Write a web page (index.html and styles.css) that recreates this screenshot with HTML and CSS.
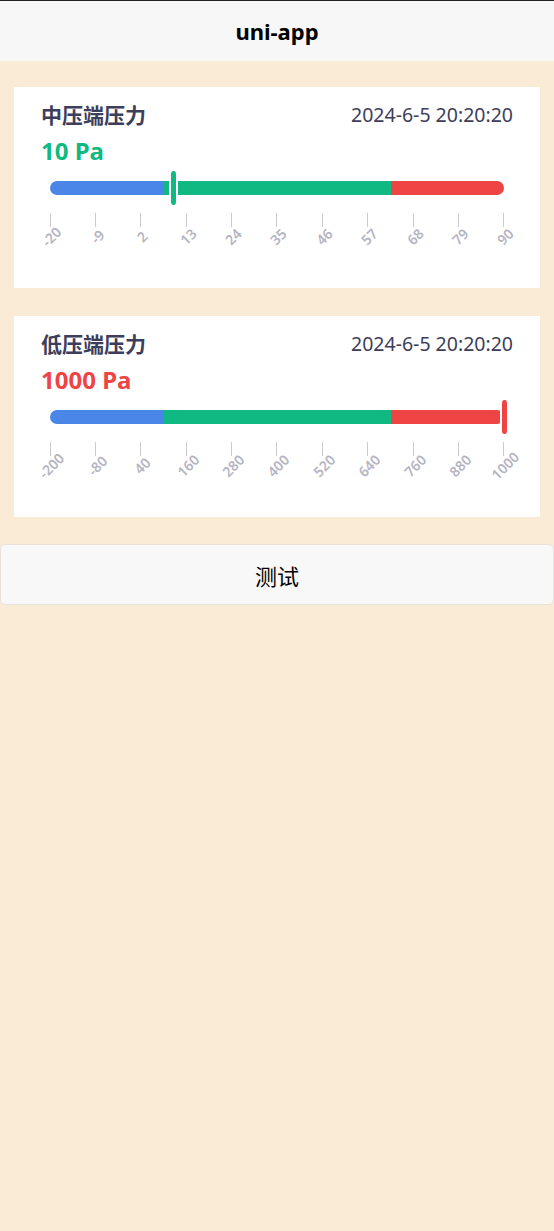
FILE: index.html
```html
<!DOCTYPE html>
<html lang="zh-CN">
<head>
  <meta charset="UTF-8">
  <title>uni-app</title>
  <link rel="stylesheet" href="styles.css">
</head>
<body>

  <!-- 顶部导航栏 -->
  <div class="nav-bar">uni-app</div>

  <div class="page">

    <!-- 中压端 -->
    <div class="card">
      <div class="card-head">
        <span class="card-title">中压端压力</span>
        <span class="card-time">2024-6-5 20:20:20</span>
      </div>
      <div class="card-value ok">10 Pa</div>
      <div class="gauge">
        <div class="gauge-bar">
          <div class="seg blue"></div>
          <div class="seg green"></div>
          <div class="seg red"></div>
        </div>
        <div class="pointer ok" style="left: 27.27%;"></div>
      </div>
      <div class="scale">
        <div class="tick"><i></i><span>-20</span></div>
        <div class="tick"><i></i><span>-9</span></div>
        <div class="tick"><i></i><span>2</span></div>
        <div class="tick"><i></i><span>13</span></div>
        <div class="tick"><i></i><span>24</span></div>
        <div class="tick"><i></i><span>35</span></div>
        <div class="tick"><i></i><span>46</span></div>
        <div class="tick"><i></i><span>57</span></div>
        <div class="tick"><i></i><span>68</span></div>
        <div class="tick"><i></i><span>79</span></div>
        <div class="tick"><i></i><span>90</span></div>
      </div>
    </div>

    <!-- 低压端 -->
    <div class="card">
      <div class="card-head">
        <span class="card-title">低压端压力</span>
        <span class="card-time">2024-6-5 20:20:20</span>
      </div>
      <div class="card-value warn">1000 Pa</div>
      <div class="gauge">
        <div class="gauge-bar">
          <div class="seg blue"></div>
          <div class="seg green"></div>
          <div class="seg red"></div>
        </div>
        <div class="pointer warn" style="left: 100%;"></div>
      </div>
      <div class="scale">
        <div class="tick"><i></i><span>-200</span></div>
        <div class="tick"><i></i><span>-80</span></div>
        <div class="tick"><i></i><span>40</span></div>
        <div class="tick"><i></i><span>160</span></div>
        <div class="tick"><i></i><span>280</span></div>
        <div class="tick"><i></i><span>400</span></div>
        <div class="tick"><i></i><span>520</span></div>
        <div class="tick"><i></i><span>640</span></div>
        <div class="tick"><i></i><span>760</span></div>
        <div class="tick"><i></i><span>880</span></div>
        <div class="tick"><i></i><span>1000</span></div>
      </div>
    </div>

  </div>

  <button class="btn-test">测试</button>

</body>
</html>
```

FILE: styles.css
```css
body {
  margin: 0;
  background: #faebd7;
  font-family: "Noto Sans", "Noto Sans CJK SC", sans-serif;
  min-height: 1231px;
}

.nav-bar {
  height: 60px;
  line-height: 60px;
  border-top: 1px solid #222;
  background: #f7f7f7;
  text-align: center;
  font-size: 22px;
  font-weight: bold;
  color: #000;
}

.page {
  padding: 26px 14px 0;
  display: flex;
  flex-direction: column;
  gap: 28px;
}

.card {
  background: #fff;
  padding: 13px 27px 0;
  height: 201px;
  box-sizing: border-box;
}

.card-head {
  display: flex;
  justify-content: space-between;
  align-items: center;
  height: 28px;
  color: #3d3d5c;
}
.card-title {
  font-size: 21px;
  font-weight: bold;
}
.card-time {
  font-size: 19.5px;
}

.card-value {
  margin-top: 7px;
  height: 32px;
  line-height: 32px;
  font-size: 24px;
  font-weight: bold;
}
.card-value.ok { color: #10b981; }
.card-value.warn { color: #ef4444; }

.gauge {
  position: relative;
  margin: 4px 9px 0;
  height: 34px;
  display: flex;
  align-items: center;
}
.gauge-bar {
  flex: 1;
  height: 14px;
  display: flex;
  border-radius: 7px;
  overflow: hidden;
}
.seg { height: 100%; }
.seg.blue { flex: 1; background: #4a86e8; }
.seg.green { flex: 2; background: #10b981; }
.seg.red { flex: 1; background: #ef4444; }

.pointer {
  position: absolute;
  top: 0;
  width: 5px;
  height: 34px;
  margin-left: -4.5px;
  border: 0 solid #fff;
  border-left-width: 2px;
  border-right-width: 2px;
  border-radius: 4px;
}
.pointer.ok { background: #10b981; }
.pointer.warn { background: #ef4444; }

.scale {
  margin: 8px 9px 0;
  display: flex;
  justify-content: space-between;
}
.tick {
  width: 0;
  display: flex;
  flex-direction: column;
  align-items: center;
}
.tick i {
  display: block;
  width: 1px;
  height: 14px;
  background: #c9c9cf;
}
.tick span {
  display: block;
  line-height: 19px;
  font-size: 14px;
  font-weight: 600;
  color: #b4b4c2;
  white-space: nowrap;
  margin-left: 3px;
  transform: rotate(-45deg);
}

.btn-test {
  display: block;
  width: 100%;
  height: 61px;
  margin-top: 27px;
  background: #f8f8f8;
  border: 1px solid #e8e2da;
  border-radius: 5px;
  font-family: "Noto Sans CJK SC", sans-serif;
  font-size: 22px;
  color: #000;
}
```
